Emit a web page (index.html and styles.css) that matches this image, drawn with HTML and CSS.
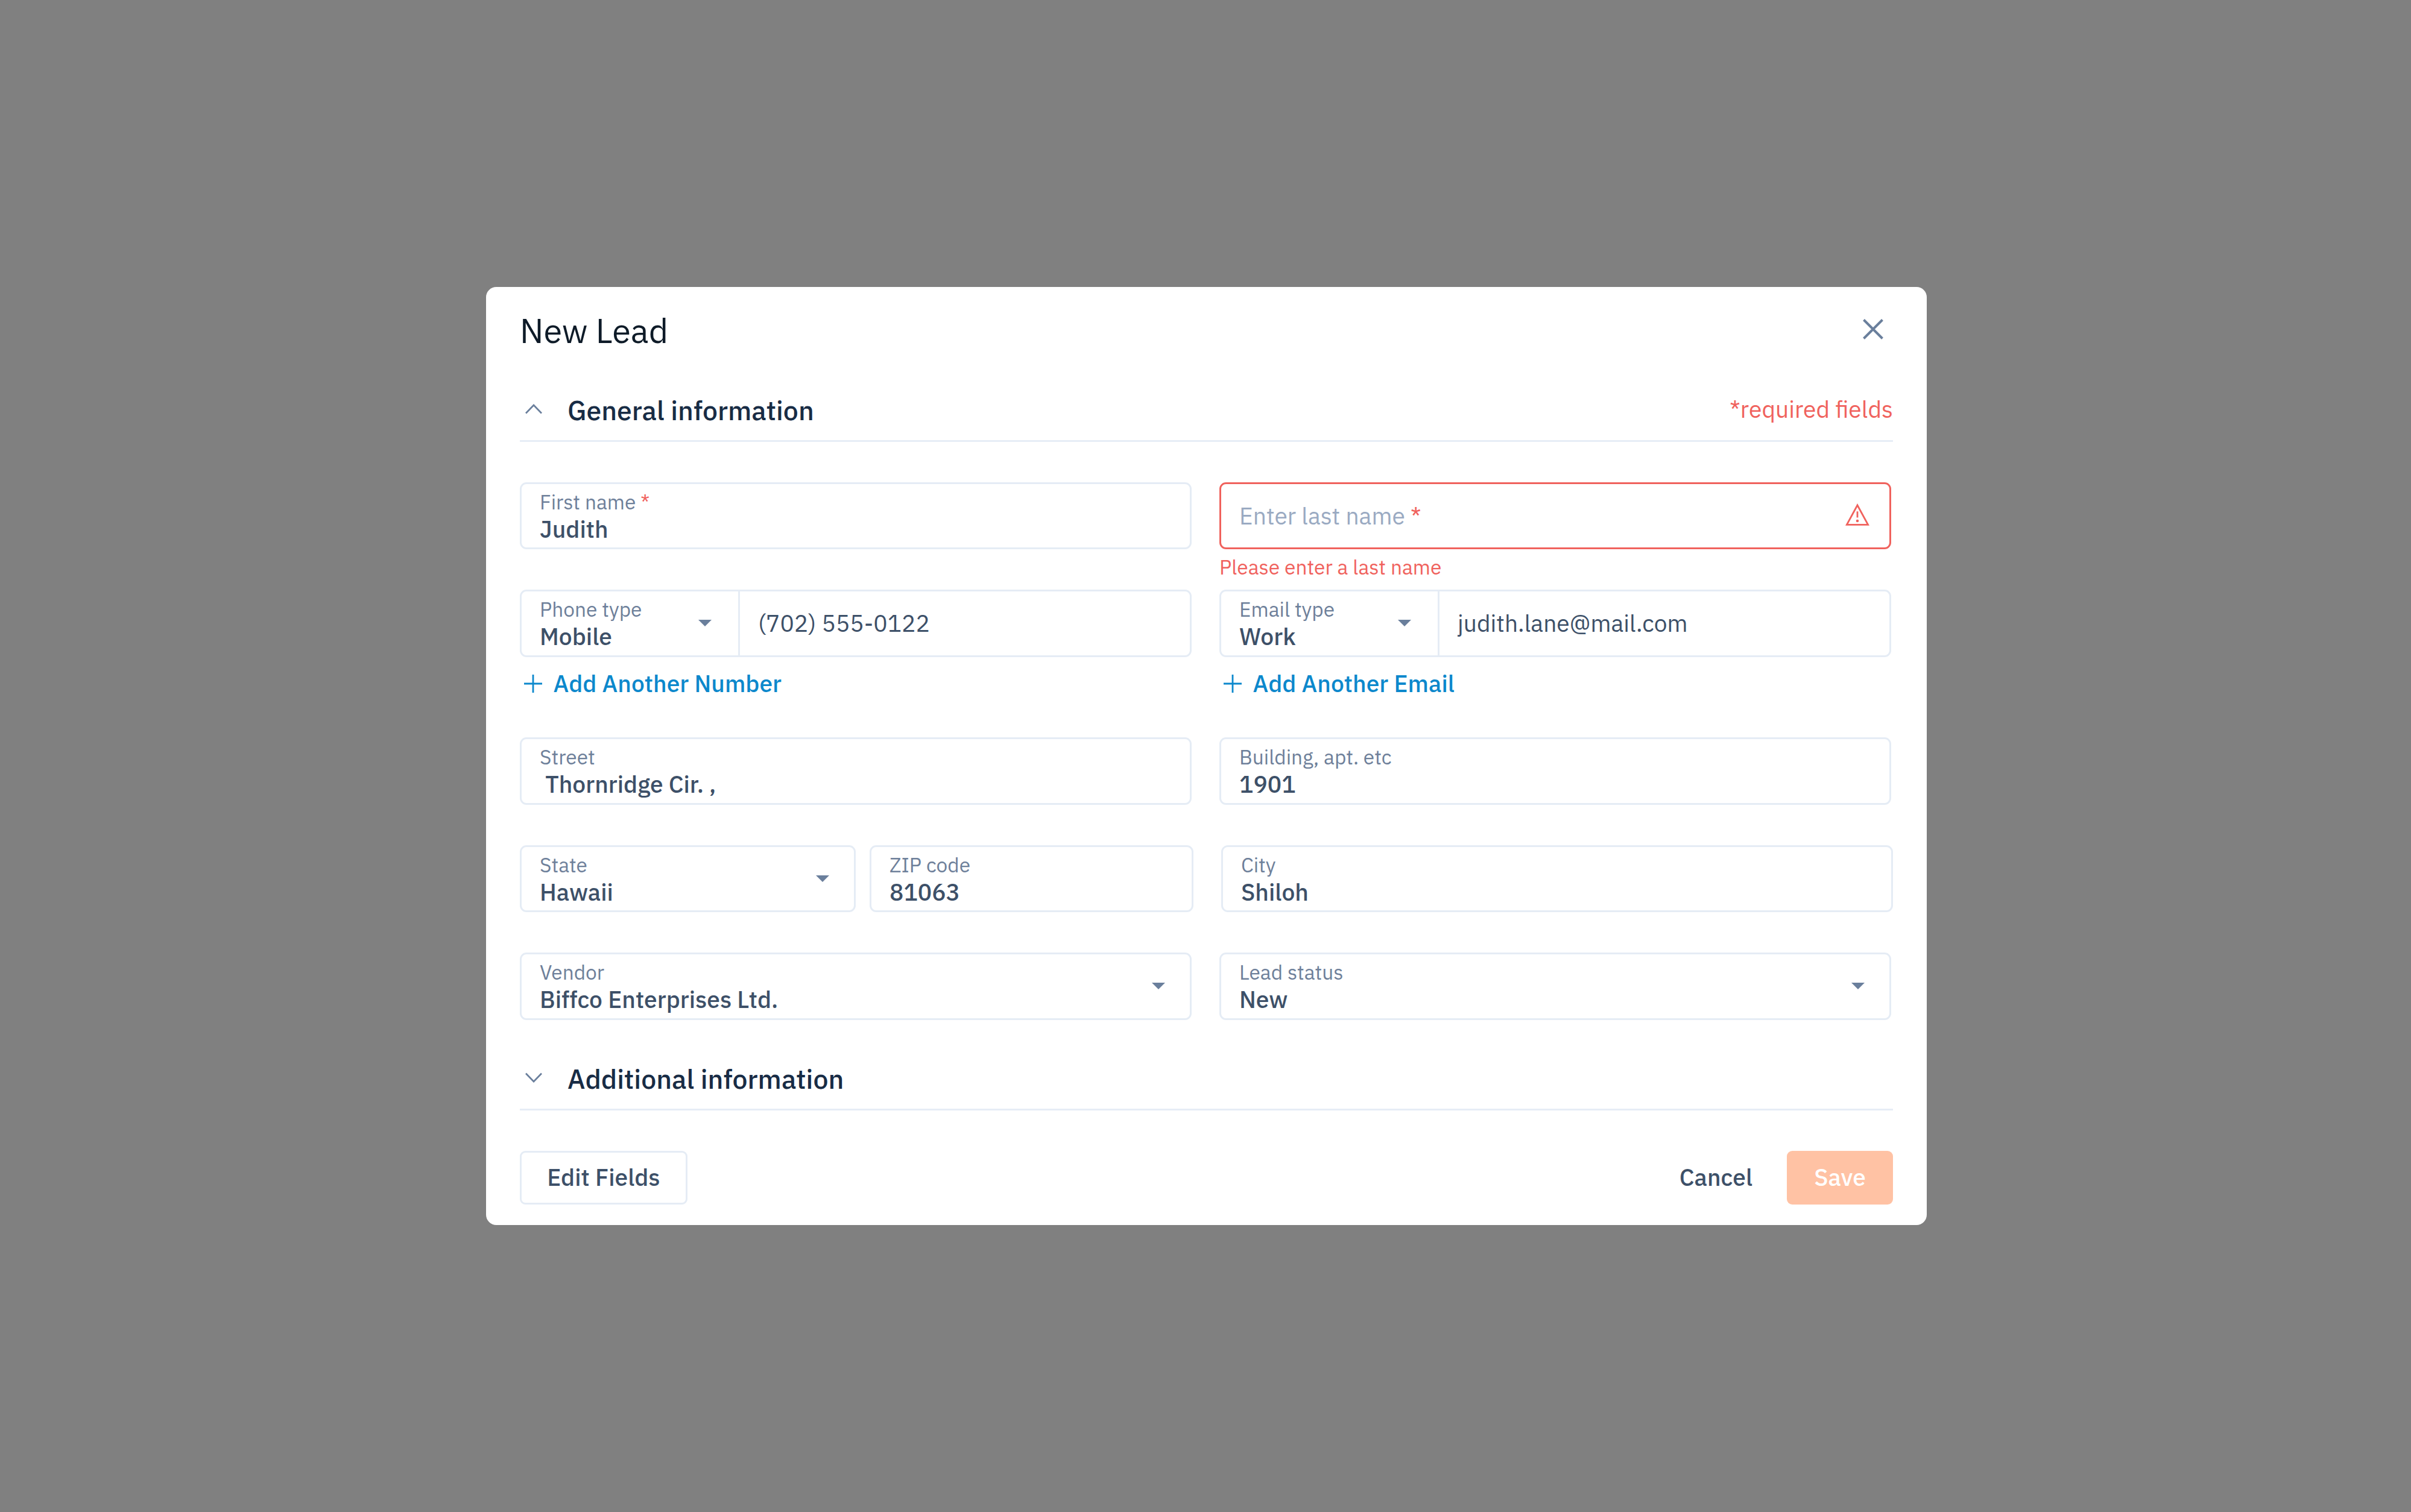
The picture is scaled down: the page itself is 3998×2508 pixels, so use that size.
FILE: index.html
```html
<!DOCTYPE html>
<html lang="en">
<head>
  <meta charset="UTF-8" />
  <meta name="viewport" content="width=device-width, initial-scale=1.0" />
  <title>New Lead</title>
  <link rel="stylesheet" href="styles.css">
</head>
<body>
  <div class="modal">
    <header class="modal-header">
      <h1>New Lead</h1>
      <button class="close-btn" aria-label="Close">
        <svg width="34" height="34" viewBox="0 0 34 34"><path d="M1.5 1.5L32.5 32.5M32.5 1.5L1.5 32.5" /></svg>
      </button>
    </header>

    <!-- General information -->
    <div class="section-header">
      <svg class="chevron" width="28" height="17" viewBox="0 0 28 17"><path d="M1 15.5L14 2L27 15.5" /></svg>
      <h2>General information</h2>
      <span class="required-note">*required fields</span>
    </div>

    <form class="lead-form">
      <div class="form-row">
        <div class="field">
          <label>First name <span class="star">*</span></label>
          <div class="value">Judith</div>
        </div>
        <div class="field-group">
          <div class="field error">
            <div class="placeholder">Enter last name <span class="star">*</span></div>
            <svg class="warning" width="40" height="38" viewBox="0 0 40 38">
              <path d="M20 3L37.6 35.3H2.4Z" />
              <path d="M20 13.3V23.5" />
              <circle cx="20" cy="29" r="2.3" />
            </svg>
          </div>
          <p class="error-text">Please enter a last name</p>
        </div>
      </div>

      <div class="form-row contact-row">
        <div class="field-group">
          <div class="field split">
            <div class="type">
              <label>Phone type</label>
              <div class="value">Mobile</div>
              <svg class="caret" width="22" height="11" viewBox="0 0 22 11"><path d="M0 0H22L11 11Z" /></svg>
            </div>
            <div class="entry">(702) 555-0122</div>
          </div>
          <a class="add-link" href="#">
            <svg width="30" height="30" viewBox="0 0 30 30"><path d="M15 0V30M0 15H30" /></svg>
            <span>Add Another Number</span>
          </a>
        </div>
        <div class="field-group">
          <div class="field split">
            <div class="type">
              <label>Email type</label>
              <div class="value">Work</div>
              <svg class="caret" width="22" height="11" viewBox="0 0 22 11"><path d="M0 0H22L11 11Z" /></svg>
            </div>
            <div class="entry">judith.lane@mail.com</div>
          </div>
          <a class="add-link" href="#">
            <svg width="30" height="30" viewBox="0 0 30 30"><path d="M15 0V30M0 15H30" /></svg>
            <span>Add Another Email</span>
          </a>
        </div>
      </div>

      <div class="form-row">
        <div class="field">
          <label>Street</label>
          <div class="value">&nbsp;Thornridge Cir. ,</div>
        </div>
        <div class="field">
          <label>Building, apt. etc</label>
          <div class="value">1901</div>
        </div>
      </div>

      <div class="form-row address-row">
        <div class="field">
          <label>State</label>
          <div class="value">Hawaii</div>
          <svg class="caret" width="22" height="11" viewBox="0 0 22 11"><path d="M0 0H22L11 11Z" /></svg>
        </div>
        <div class="field">
          <label>ZIP code</label>
          <div class="value">81063</div>
        </div>
        <div class="field city">
          <label>City</label>
          <div class="value">Shiloh</div>
        </div>
      </div>

      <div class="form-row last-row">
        <div class="field">
          <label>Vendor</label>
          <div class="value">Biffco Enterprises Ltd.</div>
          <svg class="caret" width="22" height="11" viewBox="0 0 22 11"><path d="M0 0H22L11 11Z" /></svg>
        </div>
        <div class="field">
          <label>Lead status</label>
          <div class="value">New</div>
          <svg class="caret" width="22" height="11" viewBox="0 0 22 11"><path d="M0 0H22L11 11Z" /></svg>
        </div>
      </div>
    </form>

    <!-- Additional information -->
    <div class="section-header">
      <svg class="chevron" width="28" height="17" viewBox="0 0 28 17"><path d="M1 1.5L14 15L27 1.5" /></svg>
      <h2>Additional information</h2>
    </div>

    <footer class="modal-footer">
      <button class="btn outline">Edit Fields</button>
      <button class="btn text">Cancel</button>
      <button class="btn primary">Save</button>
    </footer>
  </div>
</body>
</html>
```
FILE: styles.css
```css
/* Global Styles */
* {
  margin: 0;
  padding: 0;
  box-sizing: border-box;
  font-family: 'IBM Plex Sans', 'Noto Sans', sans-serif;
}

body {
  min-height: 100vh;
  display: flex;
  align-items: center;
  justify-content: center;
  background: #808080;
  color: #3d5068;
  font-size: 39px;
}

svg {
  display: block;
  flex-shrink: 0;
  fill: none;
}

/* Modal */
.modal {
  width: 2389px;
  height: 1556px;
  margin-left: 3px;
  padding: 0 56px;
  background: #ffffff;
  border-radius: 17px;
}

.modal-header {
  height: 146px;
  display: flex;
  align-items: center;
  justify-content: space-between;
}

.modal-header h1 {
  font-size: 55.8px;
  font-weight: 400;
  line-height: 70px;
  margin-bottom: 3px;
  color: #0e1b28;
}

.close-btn {
  width: 66px;
  height: 66px;
  margin-bottom: 6px;
  display: flex;
  align-items: center;
  justify-content: center;
  background: none;
  border: none;
}

.close-btn svg {
  stroke: #6a7f9c;
  stroke-width: 4;
}

/* Section headers */
.section-header {
  height: 111px;
  padding-top: 8px;
  display: flex;
  align-items: center;
  border-bottom: 3px solid #e6edf6;
}

.chevron {
  margin: 0 42.5px 3px 8.5px;
  stroke: #6a7f9c;
  stroke-width: 2.7;
}

.section-header h2 {
  font-size: 44.6px;
  font-weight: 500;
  line-height: 56px;
  color: #182c45;
}

.required-note {
  margin: 0 0 4px auto;
  color: #f0625d;
}

/* Form */
.lead-form {
  padding-top: 67px;
  margin-bottom: 39.6px;
}

.form-row {
  height: 178.4px;
  display: grid;
  grid-template-columns: 1114px 1114px;
  gap: 46px;
  align-items: start;
}

.contact-row {
  height: 245px;
}

.address-row {
  grid-template-columns: 557px 537px 1137px;
  gap: 23px;
}

.address-row .city {
  margin-left: 23px;
}

.last-row {
  height: 111.4px;
}

.field {
  position: relative;
  height: 111.4px;
  padding: 9px 30px 0;
  border: 3px solid #e5ecf5;
  border-radius: 11px;
}

.field label {
  display: block;
  font-size: 33.45px;
  line-height: 42px;
  color: #6e809a;
}

.value {
  font-weight: 500;
  line-height: 48px;
}

.star {
  color: #f0625d;
}

.caret {
  position: absolute;
  right: 41px;
  top: 47px;
  fill: #6a7f9c;
}

.field.error {
  display: flex;
  align-items: center;
  justify-content: space-between;
  padding-top: 0;
  border-color: #f0625d;
}

.placeholder {
  color: #9aaac2;
}

.warning {
  margin: 0 3px 3px 0;
  stroke: #f0625d;
  stroke-width: 2.8;
}

.warning circle {
  fill: #f0625d;
  stroke: none;
}

.error-text {
  font-size: 33.45px;
  line-height: 60px;
  color: #f0625d;
}

.field.split {
  display: flex;
  padding: 0;
}

.split .type {
  position: relative;
  width: 362px;
  padding: 9px 30px 0;
  border-right: 3px solid #e5ecf5;
}

.split .caret {
  right: 44.5px;
}

.entry {
  padding-left: 30px;
  line-height: 106px;
}

.add-link {
  display: flex;
  align-items: center;
  gap: 18.5px;
  height: 88px;
  padding-left: 7px;
  color: #0c88cc;
  font-weight: 500;
  text-decoration: none;
}

.add-link svg {
  stroke: #0c88cc;
  stroke-width: 2.8;
}

/* Footer */
.modal-footer {
  padding-top: 67px;
  display: flex;
}

.btn {
  height: 89px;
  padding-bottom: 2px;
  border: none;
  border-radius: 9px;
  background: none;
  color: #3d5068;
  font-size: 39px;
  font-weight: 500;
}

.btn.outline {
  width: 278px;
  border: 3px solid #e5ecf5;
}

.btn.text {
  margin-left: auto;
  padding: 0 57px 2px;
}

.btn.primary {
  width: 176px;
  background: #ffc2a4;
  color: #ffffff;
}
```
